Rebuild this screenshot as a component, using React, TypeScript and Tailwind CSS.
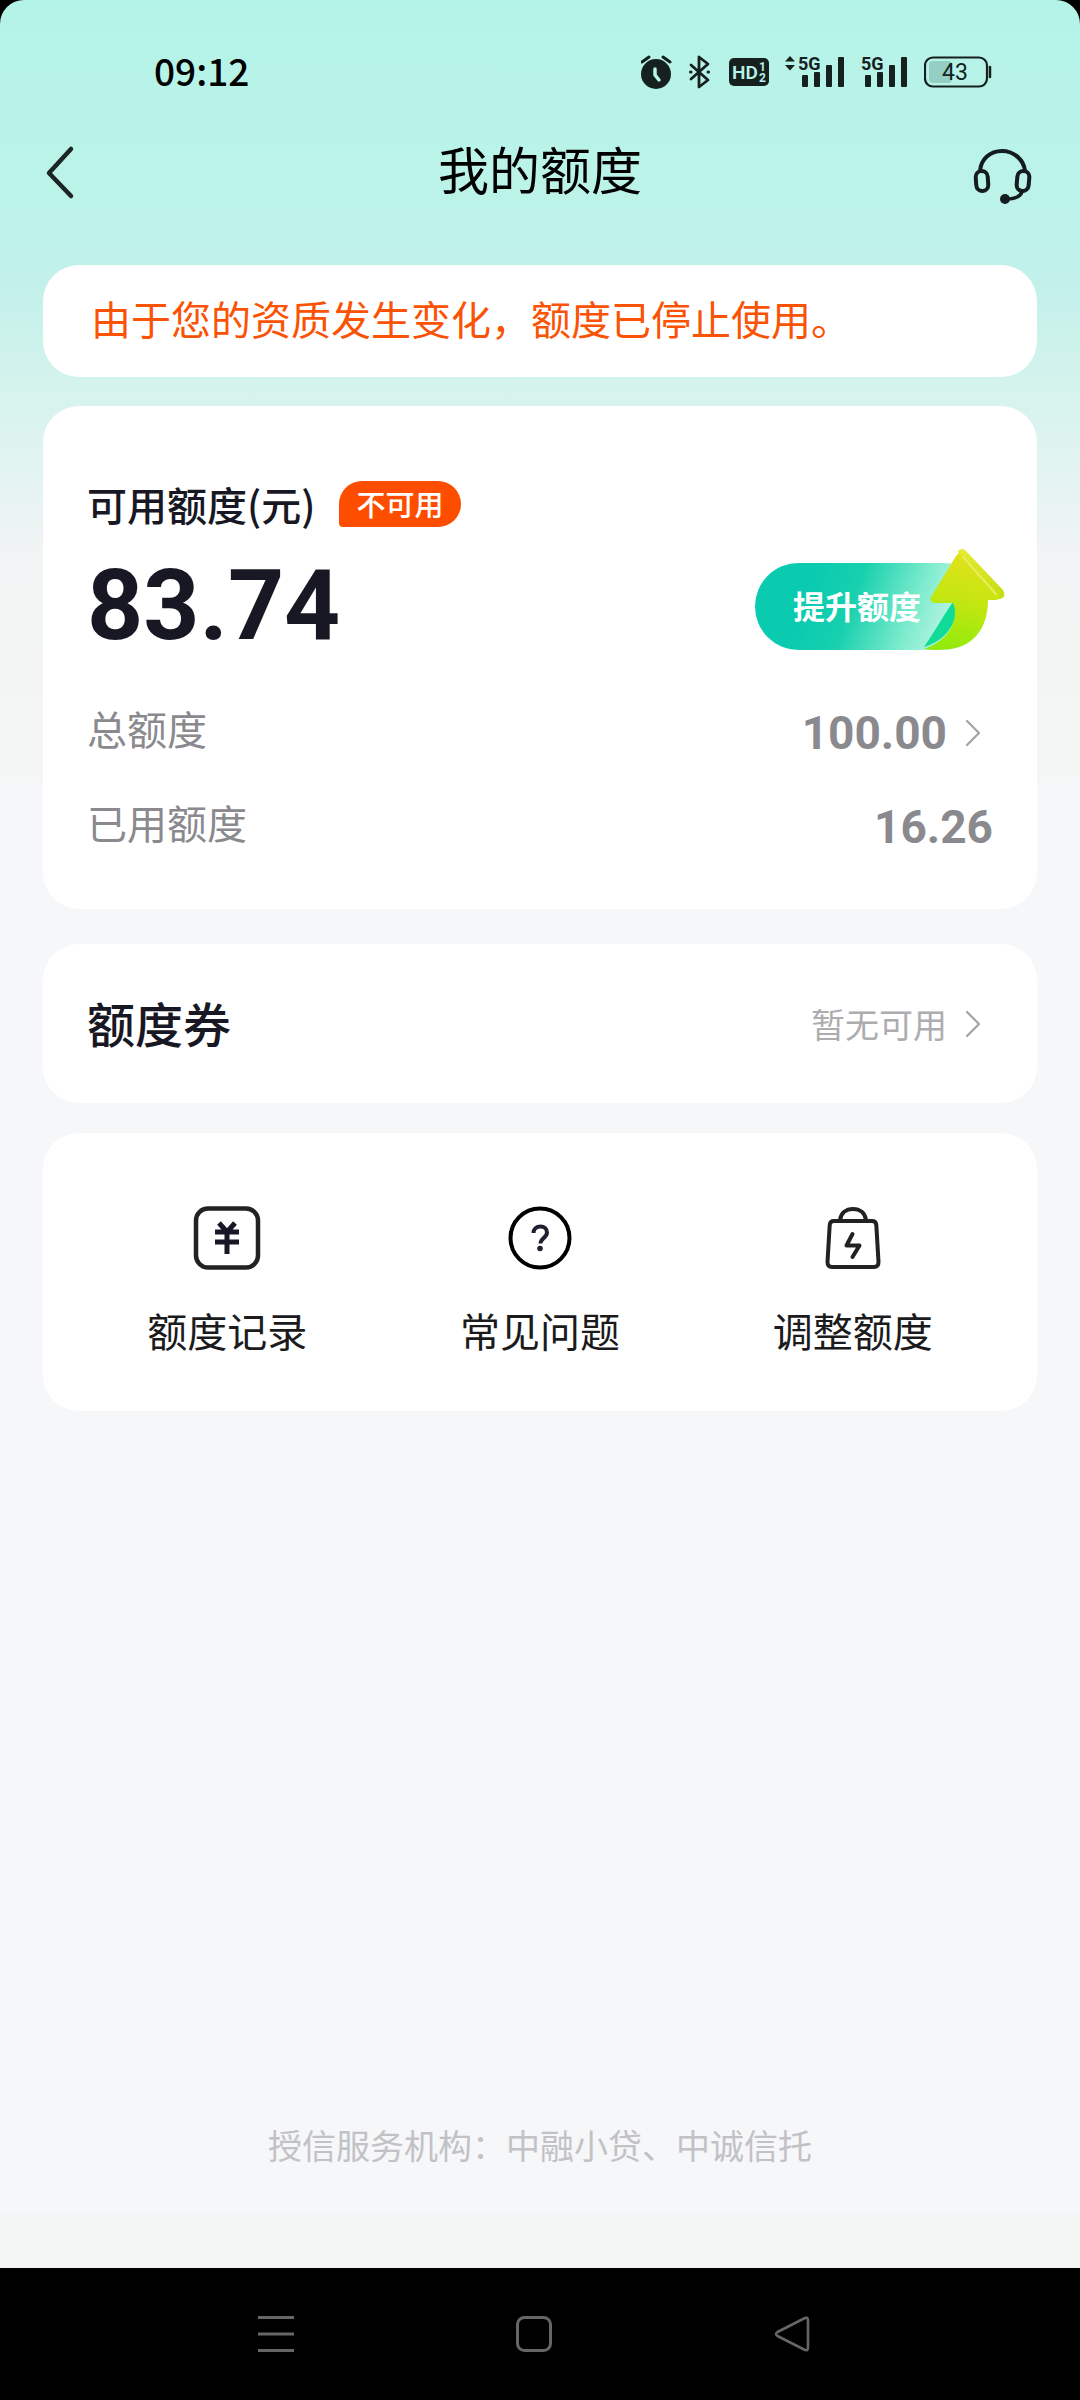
import { useId } from "react";
import type { ReactNode } from "react";

const actions = [
    { label: "额度记录", icon: <RecordIcon /> },
    { label: "常见问题", icon: <QuestionIcon /> },
    { label: "调整额度", icon: <BagIcon /> },
];

function AlarmIcon() {
    return (
        <svg className="w-8 h-9" viewBox="0 0 32 36" fill="none">
            <circle cx="15" cy="20" r="15" fill="#16211f" />
            <path d="M1 8 8 3M29 8 22 3" stroke="#16211f" strokeWidth="3" strokeLinecap="round" />
            <path d="M14 15v6l4 5" stroke="#b7f3e8" strokeWidth="3.500" strokeLinecap="round" strokeLinejoin="round" />
        </svg>
    );
}

function BluetoothIcon() {
    return (
        <svg className="w-6 h-9" viewBox="0 0 24 36" fill="none" stroke="#16211f" strokeWidth="2.800" strokeLinecap="round" strokeLinejoin="round">
            <path d="M2 11 19 26 10 33V3l9 7L2 25" />
            <path d="M1.500 18h.5M19 18h.5" strokeWidth="3" />
        </svg>
    );
}

function HdIcon() {
    return (
        <svg className="w-10 h-7" viewBox="0 0 40 28">
            <rect width="40" height="28" rx="5" fill="#16211f" />
            <text x="3" y="21" fill="#b7f3e8" fontSize="19" fontWeight="600" fontFamily="Roboto, sans-serif">HD</text>
            <text x="30" y="13" fill="#b7f3e8" fontSize="12" fontWeight="700" fontFamily="Roboto, sans-serif">1</text>
            <text x="30" y="24" fill="#b7f3e8" fontSize="12" fontWeight="700" fontFamily="Roboto, sans-serif">2</text>
        </svg>
    );
}

function SignalIcon({ arrows = false }: { arrows?: boolean }) {
    return (
        <svg className={arrows ? "w-15 h-10" : "w-[47px] h-10"} viewBox={arrows ? "-13 -5 60 40" : "0 -5 47 40"} fill="#16211f">
            {arrows && <path d="M-13 4.500-8-1l5 5.500zM-13 8h10l-5 5.500z" />}
            <text x="0" y="13" fontSize="18" fontWeight="700" fontFamily="Roboto, sans-serif">5G</text>
            <rect x="4" y="18" width="6" height="12" rx="1" />
            <rect x="16" y="15" width="6" height="15" rx="1" />
            <rect x="28" y="8" width="6" height="22" rx="1" />
            <rect x="40" y="0" width="6" height="30" rx="1" />
        </svg>
    );
}

function BatteryIcon() {
    return (
        <svg className="w-[68px] h-8" viewBox="0 0 68 32" fill="none">
            <rect x="5" y="5" width="23" height="22" rx="4" fill="#93cfc2" />
            <rect x="1" y="1.500" width="62" height="29" rx="8" stroke="#16211f" strokeWidth="2.200" />
            <path d="M66 11v10" stroke="#16211f" strokeWidth="2.500" strokeLinecap="round" />
            <text x="31" y="24" fill="#16211f" fontSize="23" textAnchor="middle" fontFamily="Roboto, sans-serif">43</text>
        </svg>
    );
}

function HeadsetIcon() {
    return (
        <svg className="w-[60px] h-[60px]" viewBox="0 0 60 60" fill="none" stroke="#131c1f" strokeWidth="4" strokeLinecap="round">
            <path d="M8 25C9 13 18 5 30 5s22 9 23 20" />
            <rect x="4" y="25" width="12" height="20" rx="6" transform="rotate(-4 10 35)" />
            <rect x="45" y="25" width="12" height="20" rx="6" transform="rotate(5 51 35)" />
            <path d="M50 46c-2 5-8 7-16 7" strokeWidth="3.500" />
            <circle cx="33" cy="53" r="5" fill="#131c1f" stroke="none" />
        </svg>
    );
}

function ChevronRight() {
    return (
        <svg className="w-4 h-7" viewBox="0 0 16 28" fill="none" stroke="#a3a3a6" strokeWidth="2.200" strokeLinecap="round" strokeLinejoin="round">
            <path d="M2 2 14 14 2 26" />
        </svg>
    );
}

function ArrowUp() {
    const id = useId();
    return (
        <svg className="absolute -top-3.5 -right-4 w-[76px] h-[103px] overflow-visible" viewBox="0 0 76 103" fill="none">
            <defs>
                <linearGradient id={`${id}body`} x1="52" y1="8" x2="28" y2="102" gradientUnits="userSpaceOnUse">
                    <stop stopColor="#e2e21c" />
                    <stop offset="0.450" stopColor="#c6e610" />
                    <stop offset="1" stopColor="#92ea0c" />
                </linearGradient>
                <linearGradient id={`${id}side`} x1="36" y1="2" x2="76" y2="48" gradientUnits="userSpaceOnUse">
                    <stop stopColor="#e6ea34" />
                    <stop offset="1" stopColor="#c4de10" />
                </linearGradient>
            </defs>
            {/* shaded inside of the bend */}
            <path d="M26 53C18 64 8 82-3 98 14 93 30 80 30 54z" fill="#10dc98" />
            <path d="M31 2Q35-2 39 2L76 41Q80 48 73 50L58 51 32 8z" fill={`url(#${id}side)`} />
            <path
                d="M29 7Q32 2 37 7L71 44Q74 50 69 51H61C61 70 54 87 39 95 28 101 12 102-3 100 14 94 28 82 28 62 28 59 27 56 26 54H7Q2 53 4 48z"
                fill={`url(#${id}body)`}
            />
            <path d="M36 8 69 45" stroke="#e8ee5c" strokeWidth="2" strokeLinecap="round" />
        </svg>
    );
}

function RecordIcon() {
    return (
        <svg className="w-[68px] h-16" viewBox="0 0 68 64" fill="none">
            <rect x="3" y="2.500" width="62" height="59" rx="12" stroke="#222" strokeWidth="4.500" />
            <path d="M26 17l8 9 8-9M22 26h24M22 36h24M34 26v22" stroke="#181726" strokeWidth="5" />
        </svg>
    );
}

function QuestionIcon() {
    return (
        <svg className="w-16 h-16" viewBox="0 0 64 64" fill="none">
            <circle cx="32" cy="32" r="29.500" stroke="#000" strokeWidth="4" />
            <path d="M25.500 27c0-4 3-6.500 7-6.500s6.500 2.500 6.500 6c0 5-6.500 6-6.500 11" stroke="#22202e" strokeWidth="4" />
            <circle cx="32" cy="42.500" r="2.800" fill="#22202e" />
        </svg>
    );
}

function BagIcon() {
    return (
        <svg className="w-16 h-16" viewBox="0 0 64 64" fill="none" stroke="#222" strokeWidth="4" strokeLinejoin="round" strokeLinecap="round">
            <path d="M19 14C20 7 25 3 32 3s12 4 13 11" />
            <path d="M13 15H51Q55 15 55.300 19L57.500 56Q57.500 61 53 61H11Q6.500 61 6.500 56L8.700 19Q9 15 13 15z" />
            <path d="M31.500 28 25.500 39.500H38.500L31.500 51" />
        </svg>
    );
}

function Card({ className, children }: { className: string; children: ReactNode }) {
    return <section className={`bg-white rounded-[36px] ${className}`}>{children}</section>;
}

export default function App() {
    return (
        <div className="min-h-screen flex flex-col bg-black font-['Noto_Sans_CJK_SC',sans-serif] text-[#181824]">
            <div className="flex-1 flex flex-col rounded-t-[24px] bg-[#f5f7f9] bg-[linear-gradient(180deg,#b4f3e7_0px,#bcf3e9_200px,#c0f1ea_270px,#d5f3ed_390px,#f1f4f4_555px,#f4f6f5_770px,#f5f7f9_790px)]">
                {/* Status bar */}
                <div className="h-[136px] pt-2 pl-[154px] pr-[88px] flex items-center justify-between text-black">
                    <span className="pb-1 text-[37px] leading-none font-medium">09:12</span>
                    <div className="flex items-center gap-4">
                        <AlarmIcon />
                        <BluetoothIcon />
                        <HdIcon />
                        <SignalIcon arrows />
                        <SignalIcon />
                        <BatteryIcon />
                    </div>
                </div>

                {/* Title bar */}
                <header className="h-[72px] px-12 flex items-center justify-between">
                    <button aria-label="返回" className="w-15 h-15 flex items-center">
                        <svg className="w-7 h-14 overflow-visible" viewBox="4 0 28 56" fill="none" stroke="#1c2725" strokeWidth="4.500" strokeLinecap="round" strokeLinejoin="round">
                            <path d="M27 5 5 29 27 52" />
                        </svg>
                    </button>
                    <h1 className="pb-2 text-[51px] leading-none text-black">我的额度</h1>
                    <button aria-label="客服" className="pt-2">
                        <HeadsetIcon />
                    </button>
                </header>

                <main className="flex-1 flex flex-col px-[43px] pt-[57px]">
                    <Card className="h-28 px-12 pb-1.5 flex items-center text-[40px] leading-none text-[#fa5305]">
                        <p>由于您的资质发生变化，额度已停止使用。</p>
                    </Card>

                    <Card className="mt-[29px] px-11 pt-[70px] pb-[35px]">
                        <div className="flex items-center gap-6">
                            <h2 className="text-[40px] leading-[56px] font-medium">可用额度(元)</h2>
                            <span className="h-[46px] px-[17px] pb-0.5 flex items-center rounded-[23px] rounded-bl-[4px] bg-[#ff4d00] text-white text-[29px] leading-none font-medium">
                                不可用
                            </span>
                        </div>
                        <div className="mt-[18px] flex items-center justify-between">
                            <strong className="font-[Roboto,sans-serif] text-[98px] leading-[112px] font-bold">83.74</strong>
                            <button className="relative mr-1.5 w-[232px] h-[87px] pl-[38px] pb-0.5 flex items-center rounded-full bg-[linear-gradient(110deg,#0acbb0_25%,#17d0ae_42%,#7aebcc_66%,#d8f9ee_90%)] text-white text-[32px] leading-none font-bold">
                                提升额度
                                <ArrowUp />
                            </button>
                        </div>
                        <dl className="text-[#8a8a8e]">
                            <div className="mt-6 h-[94px] flex items-center justify-between">
                                <dt className="pb-2.5 text-[40px] leading-none">总额度</dt>
                                <dd>
                                    <a href="#total" className="flex items-center gap-[18px] pr-3">
                                        <span className="font-[Roboto,sans-serif] text-[46px] leading-none font-bold">100.00</span>
                                        <ChevronRight />
                                    </a>
                                </dd>
                            </div>
                            <div className="h-[94px] flex items-center justify-between">
                                <dt className="pb-2.5 text-[40px] leading-none">已用额度</dt>
                                <dd className="font-[Roboto,sans-serif] text-[46px] leading-none font-bold">16.26</dd>
                            </div>
                        </dl>
                    </Card>

                    <Card className="mt-[35px] h-[159px] px-11 flex items-center justify-between">
                        <h2 className="pb-1 text-[48px] leading-none font-medium">额度券</h2>
                        <a href="#coupons" className="flex items-center gap-[18px] pr-3 text-[34px] leading-none text-[#adadb0]">
                            暂无可用
                            <ChevronRight />
                        </a>
                    </Card>

                    <Card className="mt-[30px] px-7 pt-[73px] pb-[51px] grid grid-cols-3">
                        {actions.map((action) => (
                            <button key={action.label} className="flex flex-col items-center gap-[30px] text-[40px] leading-[60px] text-[#1b1b1d]">
                                {action.icon}
                                {action.label}
                            </button>
                        ))}
                    </Card>

                    <p className="mt-auto pb-[45px] text-center text-[34px] leading-[48px] text-[#c2c2c5]">
                        授信服务机构：中融小贷、中诚信托
                    </p>
                </main>
                <div className="h-[54px] bg-[#f4f6f5]" />
            </div>

            {/* System navigation */}
            <nav className="h-[132px] pr-3 flex items-center justify-center gap-[222px] text-[#666]">
                <button aria-label="最近任务">
                    <svg className="w-9 h-9" viewBox="0 0 36 36" stroke="currentColor" strokeWidth="3">
                        <path d="M0 1.500h36M0 18h36M0 34.500h36" />
                    </svg>
                </button>
                <button aria-label="主屏幕">
                    <svg className="w-9 h-9" viewBox="0 0 36 36" fill="none" stroke="currentColor" strokeWidth="3">
                        <rect x="1.500" y="1.500" width="33" height="33" rx="7" />
                    </svg>
                </button>
                <button aria-label="后退">
                    <svg className="w-9 h-9" viewBox="0 0 36 36" fill="none" stroke="currentColor" strokeWidth="2.600" strokeLinejoin="round">
                        <path d="M30 2.500Q34 .5 34 4.500V31.500Q34 35.500 30 33.500L3.500 20Q.5 18 3.500 16z" />
                    </svg>
                </button>
            </nav>
        </div>
    );
}
